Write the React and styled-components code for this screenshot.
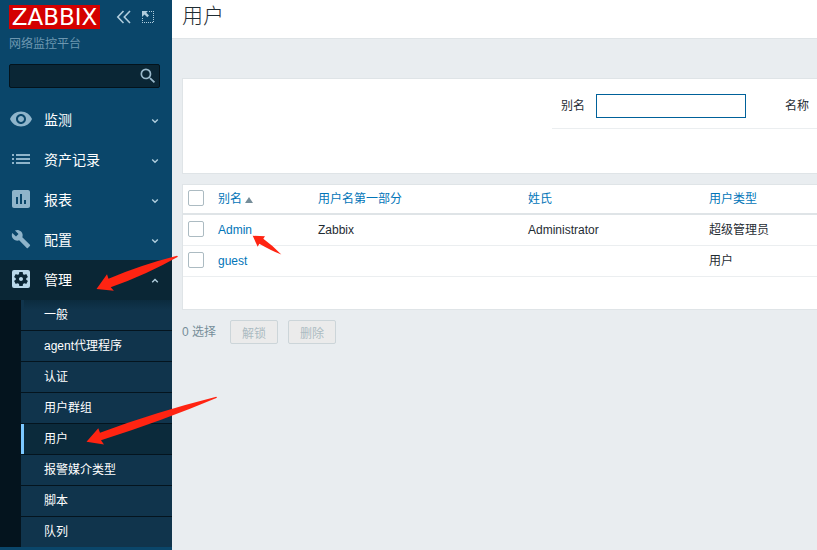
import React, { useState } from "react";
import styled, { createGlobalStyle } from "styled-components";
import {
  MdVisibility,
  MdList,
  MdAssessment,
  MdBuild,
  MdSettingsApplications,
  MdSearch,
} from "react-icons/md";

const GlobalStyle = createGlobalStyle`
  * {
    box-sizing: border-box;
  }

  body {
    margin: 0;
    background-color: #e9edf0;
    color: #1f2c33;
    font-family: "Liberation Sans", "Noto Sans CJK SC", sans-serif;
    font-size: 12px;
    line-height: 18px;
  }

  a {
    color: #0275b8;
    text-decoration: none;
  }

  ul {
    margin: 0;
    padding: 0;
    list-style: none;
  }

  input,
  button {
    font-family: inherit;
    font-size: 12px;
  }
`;

const Page = styled.div`
  position: relative;
  display: flex;
  min-height: 100vh;
  overflow: hidden;
`;

const Sidebar = styled.aside`
  flex: 0 0 172px;
  min-width: 0;
  background-color: #0a466a;
`;

const SidebarHeader = styled.div`
  display: flex;
  align-items: center;
  padding: 5px 8px 0 9px;
`;

const Logo = styled.a`
  width: 91px;
  height: 24px;
  margin-right: 16px;
  background-color: #d40000;
  color: #fff;
  font-family: "DejaVu Sans", sans-serif;
  font-size: 23px;
  line-height: 24px;
  text-align: center;
`;

const IconButton = styled.button`
  display: flex;
  padding: 0;
  margin-right: 10px;
  border: none;
  background: none;
  color: #b0cddd;
  cursor: pointer;
`;

const ServerName = styled.div`
  padding: 6px 9px 0;
  color: #6d97b0;
`;

const SearchForm = styled.form`
  display: flex;
  align-items: center;
  height: 24px;
  margin: 11px 12px 12px 9px;
  border: 1px solid #03131c;
  border-radius: 2px;
  background-color: #0a2635;

  input {
    flex: 1;
    min-width: 0;
    padding: 0 5px;
    border: none;
    outline: none;
    background: none;
    color: #fff;
  }

  button {
    margin-right: 1px;
    color: #9ab9cb;
  }
`;

const MenuLink = styled.a`
  display: flex;
  align-items: center;
  height: 40px;
  padding: 0 13px 0 9px;
  background-color: ${(props) => (props.$open ? "#0a2635" : "transparent")};
  color: #fff;
  font-size: 14px;

  span {
    flex: 1;
    padding-left: 11px;
  }
`;

const MenuIcon = styled.i`
  display: flex;
  justify-content: center;
  width: 24px;
  padding-bottom: 2px;
  color: ${(props) => (props.$open ? "#b9d8ea" : "#8fb4ca")};
`;

const SubMenu = styled.ul`
  border-left: 21px solid #04141e;
  background-color: #04141e;
  overflow: hidden;

  li + li {
    margin-top: 1px;
  }

  li:first-child a {
    background-image: linear-gradient(#0b2b3e, #10344c 10px);
  }
`;

const SubMenuLink = styled.a`
  display: block;
  height: 30px;
  padding-left: 20px;
  border-left: 3px solid ${(props) => (props.$active ? "#7cc8ff" : "#10344c")};
  background-color: ${(props) => (props.$active ? "#0b2a3b" : "#10344c")};
  color: #fff;
  line-height: 30px;
`;

const Main = styled.main`
  flex: 1;
  min-width: 0;
`;

const TitleBar = styled.header`
  height: 39px;
  padding-left: 10px;
  border-bottom: 1px solid #dfe4e7;
  background-color: #fff;

  h1 {
    margin: 0;
    font-size: 21px;
    font-weight: 300;
    line-height: 32px;
  }
`;

const Panel = styled.section`
  margin-left: 10px;
  border: 1px solid #dfe4e7;
  border-right: none;
  background-color: #fff;
`;

const FilterPanel = styled(Panel)`
  display: flex;
  justify-content: flex-end;
  margin-top: 39px;
  margin-bottom: 10px;
  padding-bottom: 44px;
`;

const FilterRow = styled.form`
  display: flex;
  align-items: center;
  padding: 15px 8px 10px 9px;
  border-bottom: 1px solid #ebeef0;

  input {
    width: 150px;
    height: 24px;
    margin: 0 39px 0 11px;
    padding: 0 5px;
    border: 1px solid #00619a;
    outline: none;
  }
`;

const Table = styled.table`
  width: 100%;
  border-collapse: separate;
  border-spacing: 0;
  table-layout: fixed;

  th,
  td {
    height: 31px;
    padding: 0 5px;
    border-bottom: 1px solid #ebeef0;
    font-weight: normal;
    text-align: left;
  }

  th {
    height: 30px;
    border-bottom: 2px solid #dfe4e7;
  }

  th:first-child,
  td:first-child {
    padding-bottom: 2px;
  }
`;

const SortArrow = styled.span`
  display: inline-block;
  margin-left: 3px;
  border: 4px solid transparent;
  border-top: none;
  border-bottom: 6px solid #768d99;
`;

const CheckBox = styled.input`
  display: block;
  width: 16px;
  height: 16px;
  margin: 0;
  border: 1px solid #acbbc2;
  border-radius: 2px;
  background-color: #fff;
  appearance: none;

  &:checked {
    background-color: #0275b8;
  }
`;

const TableFooter = styled.div`
  height: 32px;
`;

const ActionBar = styled.div`
  display: flex;
  align-items: center;
  gap: 10px;
  margin: 10px;
  color: #768d99;

  span {
    margin-right: 4px;
  }
`;

const ActionButton = styled.button`
  width: 48px;
  height: 24px;
  padding: 0;
  border: 1px solid #ccd5d9;
  border-radius: 2px;
  background-color: #ebebeb;
  color: #acbbc2;
`;

const Arrows = styled.svg`
  position: absolute;
  top: 0;
  left: 0;
  pointer-events: none;
`;

const menus = [
  { name: "监测", icon: MdVisibility, size: 24 },
  { name: "资产记录", icon: MdList, size: 24 },
  { name: "报表", icon: MdAssessment, size: 24 },
  { name: "配置", icon: MdBuild, size: 20 },
  { name: "管理", icon: MdSettingsApplications, size: 24 },
];

const subMenus = [
  "一般",
  "agent代理程序",
  "认证",
  "用户群组",
  "用户",
  "报警媒介类型",
  "脚本",
  "队列",
];

const users = [
  { alias: "Admin", name: "Zabbix", surname: "Administrator", type: "超级管理员" },
  { alias: "guest", name: "", surname: "", type: "用户" },
];

const Chevron = ({ up }) => (
  <svg width="8" height="8" viewBox="0 0 8 8" fill="none" stroke="#b0cddd" strokeWidth="1.4">
    <path d={up ? "M1.2 6.3 4 3.5l2.8 2.8" : "M1.2 3.5 4 6.3 6.8 3.5"} />
  </svg>
);

const App = () => {
  const [search, setSearch] = useState("");
  const [alias, setAlias] = useState("");
  const [checked, setChecked] = useState([]);

  const toggle = (name) => {
    setChecked(
      checked.includes(name)
        ? checked.filter((c) => c !== name)
        : [...checked, name]
    );
  };

  const toggleAll = (e) => {
    setChecked(e.target.checked ? users.map((u) => u.alias) : []);
  };

  return (
    <Page>
      <GlobalStyle />
      <Sidebar>
        <SidebarHeader>
          <Logo href="#">ZABBIX</Logo>
          <IconButton type="button" aria-label="收起">
            <svg width="16" height="14" viewBox="0 0 16 14" fill="none" stroke="currentColor" strokeWidth="1.6">
              <path d="M7.5 1 1.8 7l5.7 6M14 1 8.3 7l5.7 6" />
            </svg>
          </IconButton>
          <IconButton type="button" aria-label="隐藏">
            <svg width="12" height="12" viewBox="0 0 12 12" fill="none" stroke="currentColor">
              <path d="M7 .5h5M11.5 2v10M0 11.5h12M.5 7v5" strokeDasharray="1 1" />
              <path d="M0 0h6L4.2 1.8 7 4.6 5.3 6.3 2.5 3.5 0 6z" fill="currentColor" stroke="none" />
            </svg>
          </IconButton>
        </SidebarHeader>
        <ServerName>网络监控平台</ServerName>
        <SearchForm onSubmit={(e) => e.preventDefault()}>
          <input
            type="text"
            aria-label="搜索"
            value={search}
            onChange={(e) => setSearch(e.target.value)}
          />
          <IconButton type="submit" aria-label="搜索">
            <MdSearch size={20} />
          </IconButton>
        </SearchForm>
        <nav>
          <ul>
            {menus.map(({ name, icon: Icon, size }) => {
              const open = name === "管理";
              return (
                <li key={name}>
                  <MenuLink href="#" $open={open}>
                    <MenuIcon $open={open}>
                      <Icon size={size} />
                    </MenuIcon>
                    <span>{name}</span>
                    <Chevron up={open} />
                  </MenuLink>
                  {open && (
                    <SubMenu>
                      {subMenus.map((sub) => (
                        <li key={sub}>
                          <SubMenuLink href="#" $active={sub === "用户"}>
                            {sub}
                          </SubMenuLink>
                        </li>
                      ))}
                    </SubMenu>
                  )}
                </li>
              );
            })}
          </ul>
        </nav>
      </Sidebar>

      <Main>
        <TitleBar>
          <h1>用户</h1>
        </TitleBar>
        <FilterPanel>
          <FilterRow onSubmit={(e) => e.preventDefault()}>
            <label htmlFor="alias">别名</label>
            <input
              id="alias"
              type="text"
              value={alias}
              onChange={(e) => setAlias(e.target.value)}
            />
            <span>名称</span>
          </FilterRow>
        </FilterPanel>
        <Panel>
          <Table>
            <colgroup>
              <col width="30" />
              <col width="100" />
              <col width="210" />
              <col width="181" />
              <col />
            </colgroup>
            <thead>
              <tr>
                <th>
                  <CheckBox
                    type="checkbox"
                    aria-label="全选"
                    checked={checked.length === users.length}
                    onChange={toggleAll}
                  />
                </th>
                <th>
                  <a href="#">
                    别名
                    <SortArrow />
                  </a>
                </th>
                <th>
                  <a href="#">用户名第一部分</a>
                </th>
                <th>
                  <a href="#">姓氏</a>
                </th>
                <th>
                  <a href="#">用户类型</a>
                </th>
              </tr>
            </thead>
            <tbody>
              {users.map((user) => (
                <tr key={user.alias}>
                  <td>
                    <CheckBox
                      type="checkbox"
                      aria-label={user.alias}
                      checked={checked.includes(user.alias)}
                      onChange={() => toggle(user.alias)}
                    />
                  </td>
                  <td>
                    <a href="#">{user.alias}</a>
                  </td>
                  <td>{user.name}</td>
                  <td>{user.surname}</td>
                  <td>{user.type}</td>
                </tr>
              ))}
            </tbody>
          </Table>
          <TableFooter />
        </Panel>
        <ActionBar>
          <span>{checked.length} 选择</span>
          <ActionButton type="button" disabled={checked.length === 0}>
            解锁
          </ActionButton>
          <ActionButton type="button" disabled={checked.length === 0}>
            删除
          </ActionButton>
        </ActionBar>
      </Main>

      <Arrows width="290" height="460" viewBox="0 0 290 460" fill="#ff2412" aria-hidden="true">
        <path d="M96.5 289 107 274.3l1.5 4.4Q141 265 177 255.8l1 1Q146 275 110.7 287.3l3.2 3.4z" />
        <path d="M86.5 441.7 98.3 428.3l1.7 4.4Q156 412 216.3 396.8l.7 1Q162 421 101 440.3l3 4.2z" />
        <path d="M252.7 235.8l12.3.4-1.7 2.6Q272 245 281.3 254.6q-10-4-22-10.9l-1.6 3.1z" />
      </Arrows>
    </Page>
  );
};

export default App;
